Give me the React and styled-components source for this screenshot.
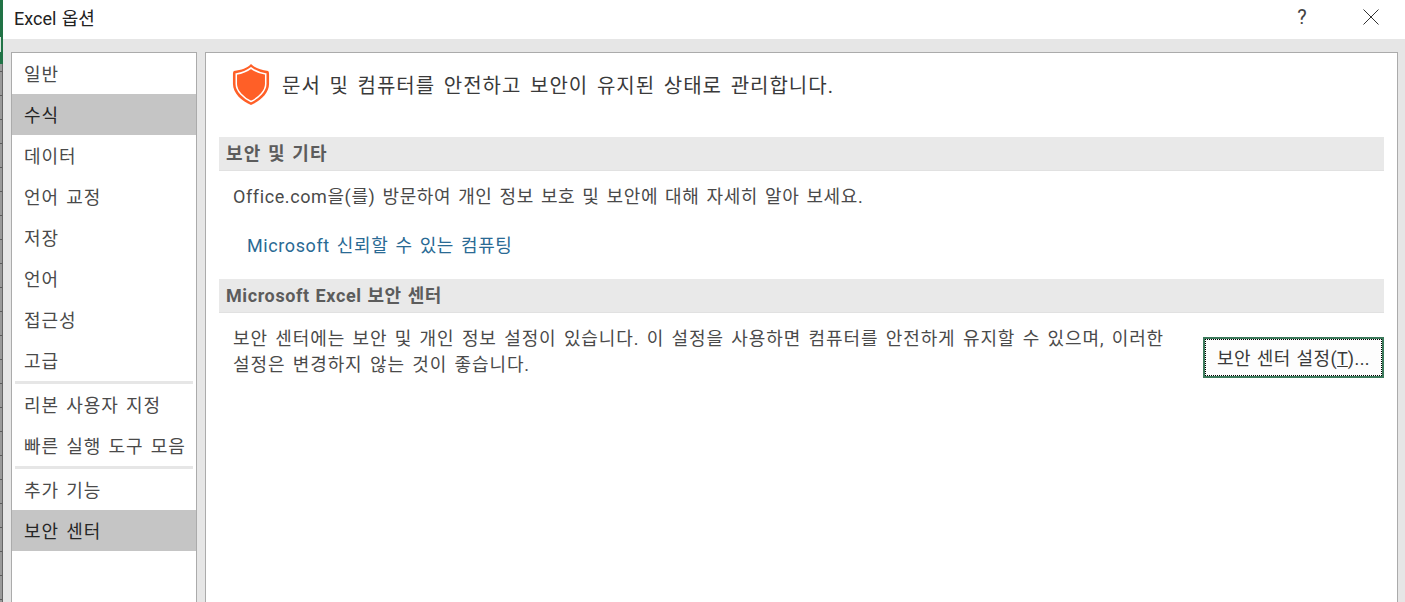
import React from 'react';
import styled, { createGlobalStyle } from 'styled-components';

const Global = createGlobalStyle`
  html, body { margin: 0; padding: 0; background: #fff; overflow: hidden; }
  * { box-sizing: border-box; }
`;
const FONT = `Roboto, "Noto Sans CJK KR", sans-serif`;

const Backdrop = styled.div`
  width: 1405px; height: 602px; display: flex; overflow: hidden;
  font-family: ${FONT}; background: #fff;
`;
const BehindStrip = styled.div`
  width: 3px; flex: none;
  border-right: 1px solid #666;
  background: repeating-linear-gradient(#9a9a9a 0, #9a9a9a 23px, #5c5c5c 23px, #5c5c5c 24px);
  display: flex; flex-direction: column;
`;
const BehindGreen = styled.div`
  height: 64px; background: #217346; margin-right: -1px; padding-top: 37px;
`;
const BehindChip = styled.div`
  width: 1px; height: 15px; background: #d8e6de;
`;
const Dialog = styled.div`
  flex: 1; display: flex; flex-direction: column; min-width: 0;
`;
const TitleBar = styled.div`
  height: 39px; flex: none; display: flex; align-items: center;
  padding: 0 0 6px 11px; background: #fff;
`;
const Title = styled.div`
  font-size: 18px; color: #222; flex: 1; word-spacing: 1px;
`;
const HelpMark = styled.div`
  width: 14px; font-size: 20px; color: #444; margin-right: 54px; text-align: center;
`;
const CloseMark = styled.svg`
  width: 16px; height: 16px; margin-right: 26px;
`;
const Body = styled.div`
  flex: 1; background: #e6e6e6; display: flex; gap: 8px; padding: 13px 7px 0 8px; min-height: 0;
`;
const Nav = styled.nav`
  width: 186px; flex: none; background: #fff;
  border: 1px solid #ababab; border-bottom: 0;
  display: flex; flex-direction: column;
`;
const NavItem = styled.div`
  height: 41px; flex: none; display: flex; align-items: center; padding: 0 0 2px 12px;
  font-size: 18px; letter-spacing: 0.9px; word-spacing: 2px;
  background: ${p => (p.$active ? '#c5c5c5' : 'transparent')};
  color: ${p => (p.$active ? '#262626' : '#4a4a4a')};
`;
const NavRule = styled.div`
  height: 3px; flex: none; margin: 0 3px; background: #e6e6e6;
`;
const Panel = styled.main`
  flex: 1; min-width: 0; background: #fff;
  border: 1px solid #ababab; border-bottom: 0;
  padding: 0 13px;
  display: flex; flex-direction: column;
`;
const Heading = styled.div`
  height: 84px; flex: none; display: flex; align-items: center; padding: 0 0 22px 13px; gap: 12px;
  font-size: 20px; letter-spacing: 1px; word-spacing: 2.7px; color: #3a3a3a;
`;
const SectionHead = styled.div`
  height: 34px; flex: none; background: #e9e9e9; display: flex; align-items: center;
  padding: 0 0 3px 7px; font-size: 18px; font-weight: 700; color: #5c5c5c;
  border-bottom: 1px solid #e1e1e1; letter-spacing: ${p => (p.$hangul ? '1.2px' : '0.6px')}; word-spacing: 0.8px;
`;
const Para = styled.p`
  margin: 0; font-size: 18px; line-height: 26px; color: #4a4a4a; letter-spacing: 0.6px; word-spacing: 2px;
  word-break: keep-all;
`;
const VisitRow = styled.div`
  padding: 13px 0 0 14px; height: 46px; flex: none;
`;
const LinkRow = styled.div`
  padding: 16px 0 0 28px; height: 62px; flex: none;
`;
const Link = styled.a`
  font-size: 18px; line-height: 26px; color: #2a6a94; letter-spacing: 0.6px; word-spacing: 2px;
`;
const CenterRow = styled.div`
  display: flex; align-items: flex-start; padding: 13px 0 0 14px;
`;
const CenterText = styled(Para)`
  width: 940px; flex: none; letter-spacing: 0.9px;
`;
const SettingsButton = styled.button`
  margin-left: auto; margin-top: 11px; width: 181px; height: 41px;
  border: 2px solid #3d7a5c; outline: 1px dotted #000; outline-offset: -3px;
  background: #fdfdfd; color: #3a3a3a; font-family: ${FONT}; font-size: 18px; letter-spacing: 0.4px; word-spacing: 1px;
  padding: 0 0 2px; white-space: nowrap;
  u { letter-spacing: 0; }
`;

const Shield = () => (
  <svg width="38" height="43" viewBox="0 0 40 43" style={{ flex: 'none' }} preserveAspectRatio="none">
    <path d="M20 1 C24 5 30 7 38 8 C39 9 39 10 39 12 L39 21 C39 30 30 38 20 42 C10 38 1 30 1 21 L1 12 C1 10 1 9 2 8 C10 7 16 5 20 1 Z" fill="#ff5f27" />
    <path d="M20 5 C24 8 29 10 35.5 11 L35.5 21 C35.5 28 28 35 20 38.5 C12 35 4.5 28 4.5 21 L4.5 11 C11 10 16 8 20 5 Z" fill="none" stroke="#fff" strokeWidth="1.6" />
  </svg>
);

const items = [
  ['일반'], ['수식', true], ['데이터'], ['언어 교정'], ['저장'], ['언어'], ['접근성'], ['고급'],
];

export default function App() {
  return (
    <Backdrop>
      <Global />
      <BehindStrip><BehindGreen><BehindChip /></BehindGreen></BehindStrip>
      <Dialog>
        <TitleBar>
          <Title>Excel 옵션</Title>
          <HelpMark>?</HelpMark>
          <CloseMark viewBox="0 0 16 16"><path d="M0.5 0.5 L15.5 15.5 M15.5 0.5 L0.5 15.5" stroke="#333" strokeWidth="1" fill="none" /></CloseMark>
        </TitleBar>
        <Body>
          <Nav>
            {items.map(([t, a]) => <NavItem key={t} $active={a}>{t}</NavItem>)}
            <NavRule />
            <NavItem>리본 사용자 지정</NavItem>
            <NavItem>빠른 실행 도구 모음</NavItem>
            <NavRule />
            <NavItem>추가 기능</NavItem>
            <NavItem $active>보안 센터</NavItem>
          </Nav>
          <Panel>
            <Heading><Shield />문서 및 컴퓨터를 안전하고 보안이 유지된 상태로 관리합니다.</Heading>
            <SectionHead $hangul>보안 및 기타</SectionHead>
            <VisitRow><Para>Office.com을(를) 방문하여 개인 정보 보호 및 보안에 대해 자세히 알아 보세요.</Para></VisitRow>
            <LinkRow><Link>Microsoft 신뢰할 수 있는 컴퓨팅</Link></LinkRow>
            <SectionHead>Microsoft Excel 보안 센터</SectionHead>
            <CenterRow>
              <CenterText>보안 센터에는 보안 및 개인 정보 설정이 있습니다. 이 설정을 사용하면 컴퓨터를 안전하게 유지할 수 있으며, 이러한 설정은 변경하지 않는 것이 좋습니다.</CenterText>
              <SettingsButton>보안 센터 설정(<u>T</u>)...</SettingsButton>
            </CenterRow>
          </Panel>
        </Body>
      </Dialog>
    </Backdrop>
  );
}
